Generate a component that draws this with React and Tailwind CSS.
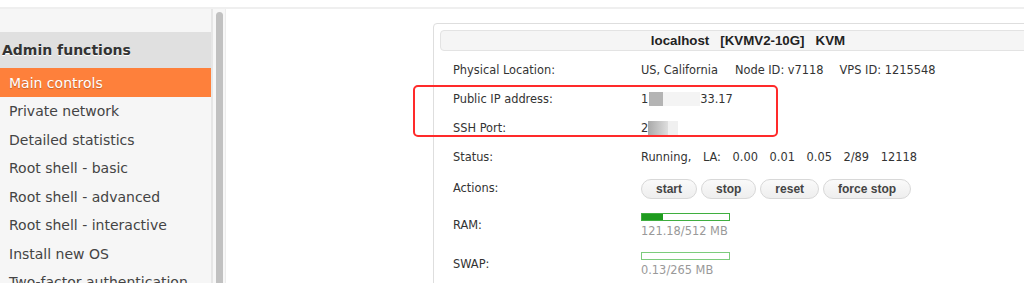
import React from 'react';

const menuItems = [
  'Private network',
  'Detailed statistics',
  'Root shell - basic',
  'Root shell - advanced',
  'Root shell - interactive',
  'Install new OS',
  'Two-factor authentication',
];

const Row = ({ label, className = 'h-[29px]', children }) => (
  <div className={`flex items-center ${className}`}>
    <div className="w-[201px] shrink-0 pl-[13px]">{label}</div>
    <div className="flex-1">{children}</div>
  </div>
);

const MemBar = ({ used, total, border }) => (
  <div className="flex flex-col">
    <div className={`w-[89px] h-[8px] border ${border} bg-white`}>
      <div className="h-full bg-[#1e9b1e]" style={{ width: `${(used / total) * 100}%` }}></div>
    </div>
    <div className="mt-[3px] text-[#999] leading-[14px]">{used}/{total} MB</div>
  </div>
);

const App = () => {
  return (
    <div className="relative w-[1024px] h-[283px] overflow-hidden bg-white font-['DejaVu_Sans',Verdana,sans-serif] text-[11.4px] text-[#333]">
      <div className="h-[7px]"></div>
      <div className="h-[2px] bg-[#efefef]"></div>
      <div className="flex h-[274px]">
        {/* sidebar */}
        <div className="w-[211px] shrink-0 bg-[#f6f6f6] pt-[23px] text-[14px] text-[#444]">
          <div className="h-[36px] flex items-center pl-[2px] bg-[#e0e0e0] font-bold text-[#333] [text-shadow:0_1px_0_#fff]">
            Admin functions
          </div>
          <div className="h-[29px] flex items-center pl-[9px] pt-[2px] bg-[#fe803b] text-white [text-shadow:0_1px_1px_rgba(0,0,0,0.25)]">
            Main controls
          </div>
          {menuItems.map((item) => (
            <div key={item} className="h-[28.5px] flex items-center pl-[9px] pt-[1px] whitespace-nowrap">
              {item}
            </div>
          ))}
        </div>

        {/* scrollbar */}
        <div className="w-[14px] shrink-0 flex border-l-2 border-[#e6e6e6] bg-[#f7f7f7]">
          <div className="ml-[3px] mt-[3px] w-[7px] h-full rounded-full bg-[#c1c1c1]"></div>
        </div>

        {/* main */}
        <div className="flex-1 border-l border-[#ececec] pl-[207px] pt-[14px]">
          <div className="w-[630px] h-[300px] border border-[#dedede] rounded-[4px] p-[6px]">
            <div className="h-[21px] flex items-center justify-center bg-[#f5f5f5] border border-[#e3e3e3] rounded-[4px] font-['Liberation_Sans',Arial,sans-serif] font-bold text-[13.3px] text-[#222] whitespace-pre">
              {'localhost   [KVMV2-10G]   KVM'}
            </div>
            <div className="mt-[5px]">
              <Row label="Physical Location:">
                <span>US, California</span>
                <span className="ml-[17px]">Node ID: v7118</span>
                <span className="ml-[16px]">VPS ID: 1215548</span>
              </Row>
              <Row label="Public IP address:">
                <div className="flex items-center">
                  <span>1</span>
                  <span className="ml-[1px] w-[14px] h-[14px] bg-[#b4b4b4]"></span>
                  <span className="w-[37px] h-[14px] bg-[#f4f4f4]"></span>
                  <span>33.17</span>
                </div>
              </Row>
              <Row label="SSH Port:">
                <div className="flex items-center">
                  <span>2</span>
                  <span className="w-[20px] h-[14px] bg-gradient-to-r from-[#a9a9a9] to-[#dedede]"></span>
                  <span className="w-[10px] h-[14px] bg-[#f0f0f0]"></span>
                </div>
              </Row>
              <Row label="Status:">
                <span className="[word-spacing:8px]">Running, LA: 0.00 0.01 0.05 2/89 12118</span>
              </Row>
              <Row label="Actions:" className="h-[34px]">
                <div className="flex gap-[4px] font-['Liberation_Sans',Arial,sans-serif] font-bold text-[12px] text-[#444]">
                  {['start', 'stop', 'reset', 'force stop'].map((b) => (
                    <button
                      key={b}
                      className="h-[20px] px-[14px] rounded-full border border-[#d8d8d8] bg-gradient-to-b from-[#fafafa] to-[#eeeeee]"
                    >
                      {b}
                    </button>
                  ))}
                </div>
              </Row>
              <Row label="RAM:" className="h-[39px]">
                <MemBar used={121.18} total={512} border="border-[#3fae3f]" />
              </Row>
              <Row label="SWAP:" className="h-[39px]">
                <MemBar used={0.13} total={265} border="border-[#7ccc7c]" />
              </Row>
            </div>
          </div>
        </div>
      </div>

      {/* highlight annotation */}
      <div className="absolute left-[413px] top-[85px] w-[365px] h-[52px] border-2 border-[#ff2a2a] rounded-[5px]"></div>
    </div>
  );
};

export default App;
